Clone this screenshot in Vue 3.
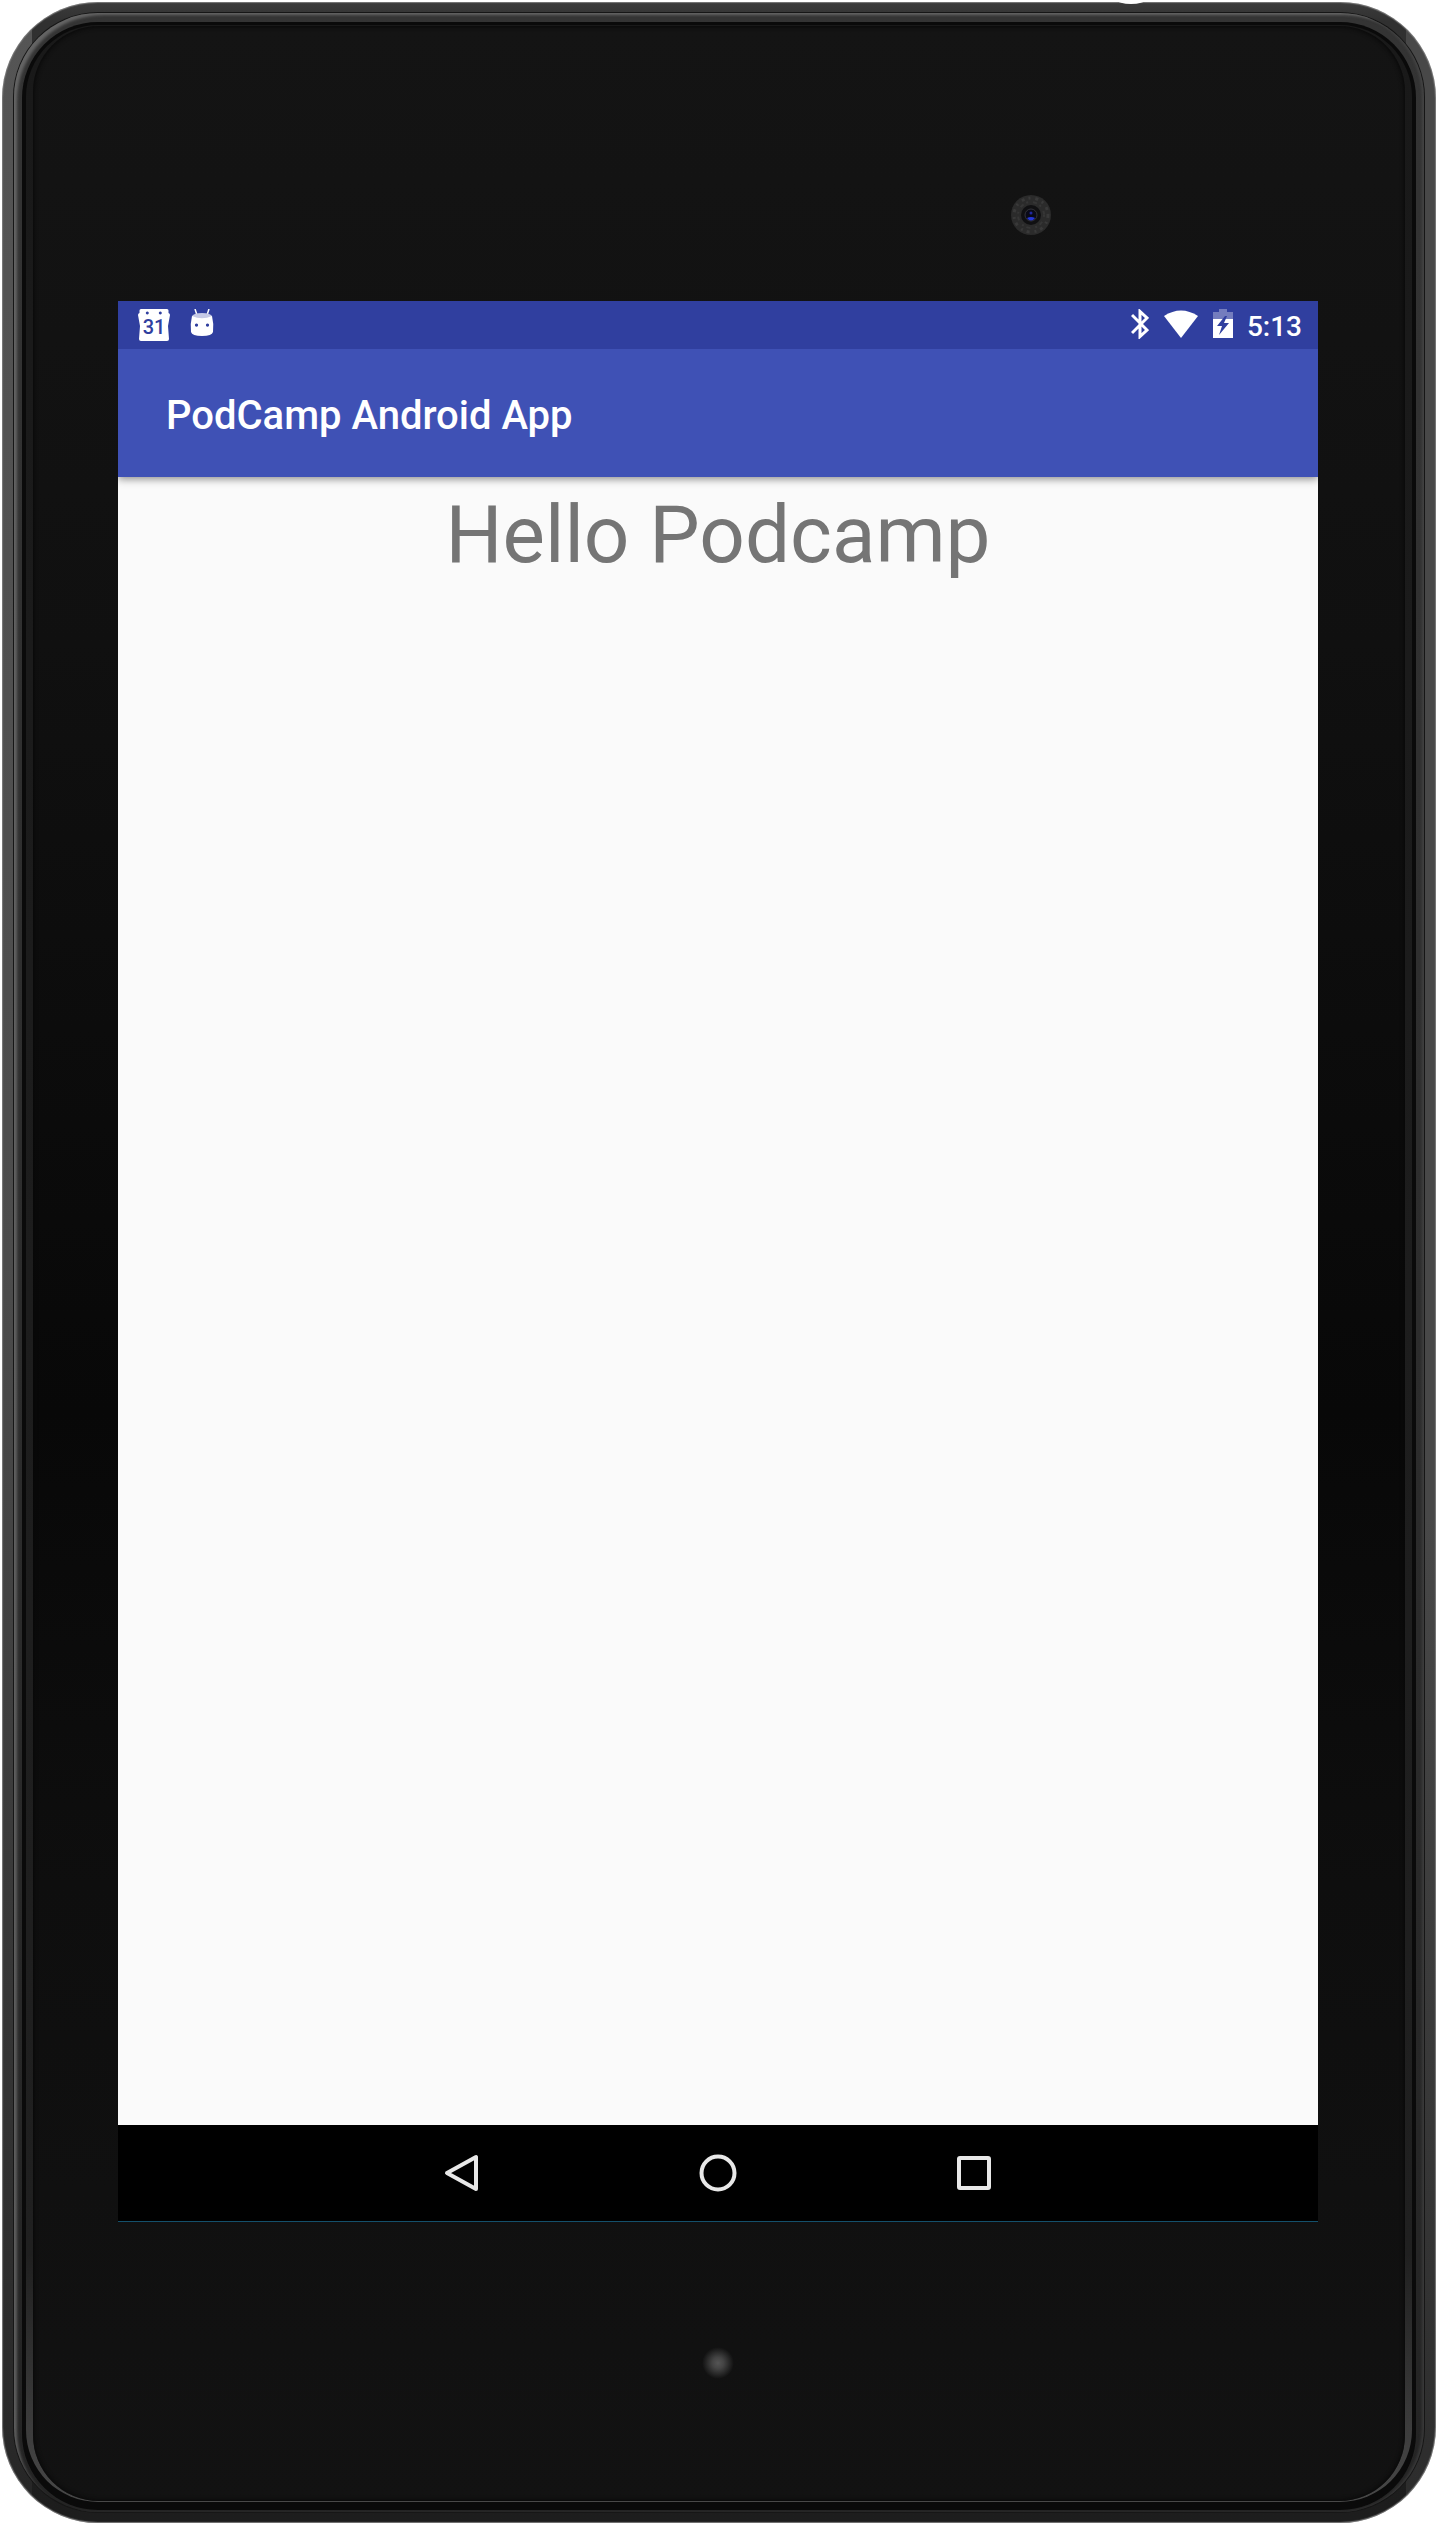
<script setup>
const title = 'PodCamp Android App'
const message = 'Hello Podcamp'
const time = '5:13'
</script>

<template>
  <main class="page">
    <div class="device">
      <span class="notch"></span>
      <div class="seam">
        <div class="bevel">
          <div class="groove">
            <div class="lip">
              <div class="face">
                <div class="bezel bezel-top">
                  <svg class="camera" viewBox="0 0 42 42" aria-hidden="true">
                    <circle cx="21" cy="21" r="20" fill="#2b2b2b" />
                    <circle cx="21" cy="21" r="17" fill="none" stroke="#393939" stroke-width="3" stroke-dasharray="3 4 2 5" />
                    <circle cx="21" cy="21" r="13" fill="none" stroke="#363636" stroke-width="2" stroke-dasharray="2 5 4 3" />
                    <circle cx="21" cy="21" r="10" fill="#101012" />
                    <circle cx="21" cy="21" r="6" fill="#0a0a18" stroke="#333338" stroke-width="1" />
                    <circle cx="21" cy="19" r="1.5" fill="#2028a0" />
                    <path d="M17 24q4-2 8 0q-4 5-8 0z" fill="#2638d8" />
                  </svg>
                </div>

                <section class="screen">
                  <div class="status">
                    <div class="group">
                      <svg class="calendar" viewBox="0 0 32 32" aria-hidden="true">
                        <path fill="#fff" fill-rule="evenodd" d="M3 0H29Q30.500 0 30.500 1.500V4Q32 4.500 32 6L30 17L31 30Q31 32 29 32H3Q1 32 1 30L2 17L0 6Q0 4.500 1.500 4V1.500Q1.500 0 3 0zM9.300 2.500a1.500 1.500 0 1 0 .01 0zM22.300 2.500a1.500 1.500 0 1 0 .01 0z" />
                        <text x="16" y="25" text-anchor="middle">31</text>
                      </svg>
                      <svg class="robot" viewBox="0 0 24 28" aria-hidden="true">
                        <path d="M5 0L7 6M19 0L17 6" stroke="#fff" stroke-width="1.500" />
                        <path fill="#c6cae6" d="M2 7Q4 4 12 4T22 7L21 10H3z" />
                        <path fill="#fff" fill-rule="evenodd" d="M2 7Q12 11.500 22 7Q24 15 23 23Q22 27 12 27T1 23Q0 15 2 7zM6.500 14.500a1.600 1.600 0 1 0 .01 0zM17.500 14.500a1.600 1.600 0 1 0 .01 0z" />
                      </svg>
                    </div>
                    <div class="group">
                      <svg class="bluetooth" viewBox="0 0 18 30" aria-hidden="true">
                        <path d="M1 6L16 21L9 27.500V2.500L16 9L1 24" fill="none" stroke="#fff" stroke-width="3" />
                      </svg>
                      <svg class="wifi" viewBox="0 0 36 30" aria-hidden="true">
                        <path d="M1 7Q18-4 35 7L18 29z" fill="#fff" />
                      </svg>
                      <svg class="battery" viewBox="0 0 20 30" aria-hidden="true">
                        <path d="M0 10V3H6V0H14V3H20V10z" fill="#747dbe" />
                        <path d="M0 10H20V29H0z" fill="#fff" />
                        <path d="M12 7L4 17H9L6 26L16 14H11L14 7z" fill="#303f9f" />
                      </svg>
                      <time class="clock">{{ time }}</time>
                    </div>
                  </div>
                  <header class="appbar">
                    <h1>{{ title }}</h1>
                  </header>
                  <div class="content">
                    <p>{{ message }}</p>
                  </div>
                  <nav class="navbar">
                    <button type="button" aria-label="Back">
                      <svg viewBox="0 0 40 40"><path d="M34 4V36L5 20z" /></svg>
                    </button>
                    <button type="button" aria-label="Home">
                      <svg viewBox="0 0 40 40"><circle cx="20" cy="20" r="16.500" /></svg>
                    </button>
                    <button type="button" aria-label="Overview">
                      <svg viewBox="0 0 40 40"><rect x="5" y="5" width="30" height="30" rx="1" /></svg>
                    </button>
                  </nav>
                </section>

                <div class="bezel bezel-bottom">
                  <span class="led"></span>
                </div>
              </div>
            </div>
          </div>
        </div>
      </div>
    </div>
  </main>
</template>

<style>
body {
  background: #fff;
}
</style>

<style scoped>
.page {
  padding: 2px 1px 4px 2px;
  font-family: Roboto, sans-serif;
}

.device {
  position: relative;
  padding: 10px 11px;
  border-radius: 96px;
  background:
    linear-gradient(to bottom, #555 0, #4c4c4c 50%, #262626 100%) left / 30px 100% no-repeat,
    linear-gradient(to bottom, #484848 0, #484848 60%, #2c2c2c 100%) right / 30px 100% no-repeat,
    linear-gradient(to bottom, #3c3c3c 0, #303030 20px, #1d1d1d 100%);
  box-shadow: inset 0 0 1px 1px #7a7a7a;
}

.notch {
  position: absolute;
  top: -2px;
  right: 291px;
  width: 28px;
  height: 4px;
  border-radius: 0 0 14px 14px / 0 0 4px 4px;
  background: #fff;
}

.seam {
  padding: 1px;
  border-radius: 85px;
  background: #161616;
}

.bevel {
  padding: 9px 8px 2px;
  border-radius: 84px;
  background: linear-gradient(to bottom, #343434 0, #2c2c2c 60%, #242424 100%);
  box-shadow:
    inset 5px 4px 3px -2px rgba(150, 150, 150, 0.5),
    inset -3px 0 3px -1px rgba(110, 110, 110, 0.3);
}

.groove {
  padding: 3px 4px 8px;
  border-radius: 76px;
  background: #0a0a0a;
}

.lip {
  padding: 1px 7px 1px;
  border-radius: 72px;
  background: linear-gradient(to bottom, #191919, #202020 90%, #484848);
}

.seam,
.bevel,
.groove,
.lip,
.face {
  overflow: hidden;
}

.face {
  padding: 0 87px 0 85px;
  border-radius: 66px;
  background: linear-gradient(to bottom, #141414 0, #101010 25%, #080808 56%, #0e0e0e 75%, #121212 100%);
  box-shadow: inset 0 0 4px 1px #080808;
}

.bezel {
  display: flex;
}

.bezel-top {
  height: 275px;
  justify-content: flex-end;
  align-items: flex-start;
  padding: 168px 266px 0 0;
  box-sizing: border-box;
}

.camera {
  width: 42px;
  height: 42px;
}

.bezel-bottom {
  height: 280px;
  justify-content: center;
  align-items: center;
  padding-top: 4px;
  box-sizing: border-box;
}

.led {
  width: 32px;
  height: 32px;
  border-radius: 50%;
  background: radial-gradient(circle, #555 0, #444 25%, #222 55%, transparent 70%);
}

.screen {
  display: flex;
  flex-direction: column;
  aspect-ratio: 5 / 8;
  background: #fafafa;
  box-shadow: 0 1px 0 #14506b;
}

.status {
  display: flex;
  justify-content: space-between;
  align-items: flex-start;
  height: 48px;
  padding: 8px 16px 0 20px;
  box-sizing: border-box;
  background: #303f9f;
}

.group {
  display: flex;
  align-items: flex-start;
}

.calendar {
  width: 32px;
  height: 32px;
  margin-right: 20px;
}

.calendar text {
  font-size: 20px;
  font-weight: 500;
  fill: #303f9f;
}

.robot {
  width: 24px;
  height: 28px;
}

.bluetooth {
  width: 18px;
  height: 30px;
  margin-right: 14px;
}

.wifi {
  width: 36px;
  height: 30px;
  margin-right: 14px;
}

.battery {
  width: 20px;
  height: 30px;
  margin-right: 14px;
}

.clock {
  font-size: 28px;
  line-height: 36px;
  font-weight: 500;
  color: #fff;
}

.appbar {
  display: flex;
  align-items: center;
  height: 128px;
  padding: 6px 48px 0;
  box-sizing: border-box;
  background: #3f51b5;
  box-shadow: 0 2px 8px rgba(0, 0, 0, 0.45);
  clip-path: inset(0 0 -12px 0);
}

h1 {
  margin: 0;
  font-size: 40px;
  line-height: 48px;
  font-weight: 500;
  color: #fff;
}

.content {
  flex: 1;
}

p {
  margin: 0;
  padding-top: 10px;
  font-size: 80px;
  line-height: 96px;
  text-align: center;
  color: #757575;
}

.navbar {
  display: flex;
  justify-content: center;
  height: 96px;
  background: #000;
}

.navbar button {
  display: flex;
  justify-content: center;
  align-items: center;
  width: 256px;
  padding: 0;
  border: 0;
  background: none;
}

.navbar svg {
  width: 40px;
  height: 40px;
  fill: none;
  stroke: #e8e8e8;
  stroke-width: 4;
  stroke-linejoin: round;
}
</style>
